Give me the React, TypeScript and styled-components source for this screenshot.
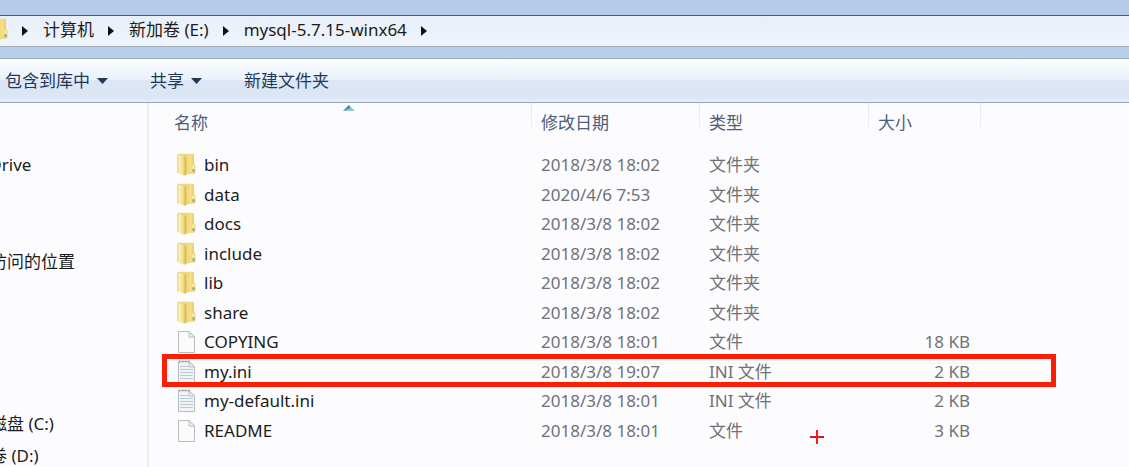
import React from "react";
import styled, { createGlobalStyle } from "styled-components";

const GlobalStyle = createGlobalStyle`
  * { box-sizing: border-box; }
  html, body, #root { height: 100%; }
  body {
    margin: 0;
    overflow: hidden;
    background: #fcfcfe;
    font-family: "Noto Sans", "Noto Sans CJK SC", sans-serif;
    font-size: 17px;
    line-height: 24px;
    color: #1c1c20;
  }
  button { font: inherit; color: inherit; background: none; border: 0; padding: 0; }
  a { color: inherit; text-decoration: none; }
`;

const Window = styled.div`
  display: flex;
  flex-direction: column;
  min-height: 100%;
`;

const Frame = styled.header`
  padding: 15px 0 11px;
  background: linear-gradient(#b3cae9, #b9d0ed);
`;

const AddressBar = styled.nav`
  display: flex;
  align-items: center;
  height: 32px;
  padding-bottom: 2px;
  border-top: 1px solid #4e5866;
  border-bottom: 1px solid #a3aebd;
  background: linear-gradient(#e9eff9, #f0f4fb);
`;

const FolderEdge = styled.span`
  display: flex;
  width: 8px;
  justify-content: flex-end;
  overflow: hidden;
  svg { flex: none; }
`;

const Crumb = styled.button`
  white-space: nowrap;
`;

const CrumbArrow = styled.svg`
  flex: none;
  width: 6px;
  height: 10px;
  margin: 2px 15px 0 14px;
`;

const Toolbar = styled.div`
  display: flex;
  align-items: center;
  gap: 42px;
  height: 45px;
  padding-left: 5px;
  border-top: 1px solid #97a9c2;
  border-bottom: 1px solid #93a4bb;
  background: linear-gradient(#fbfdff, #eaf1fb 48%, #dce6f5 50%, #dbe5f4 90%, #e2effc);
  color: #1e395b;
`;

const ToolButton = styled.button`
  display: flex;
  align-items: center;
  gap: 7px;
  white-space: nowrap;
`;

const Body = styled.div`
  display: flex;
  flex: 1;
`;

const Sidebar = styled.nav`
  flex: none;
  width: 149px;
  overflow: hidden;
  border-right: 2px solid #e4eef9;
`;

const Group = styled.ul<{ $space: number }>`
  list-style: none;
  margin: ${(p) => p.$space}px 0 0 -44px;
  padding: 0;
`;

const Place = styled.li`
  height: 32px;
  line-height: 32px;
  white-space: nowrap;
`;

const Pane = styled.main`
  position: relative;
  flex: 1;
  min-width: 0;
`;

const FileTable = styled.table`
  width: 100%;
  table-layout: fixed;
  border-collapse: collapse;
`;

const Column = styled.col<{ $width?: number }>`
  width: ${(p) => (p.$width ? `${p.$width}px` : "auto")};
`;

const Heading = styled.th<{ $first?: boolean }>`
  position: relative;
  height: 47px;
  padding: 8px 0 0 ${(p) => (p.$first ? 25 : 9)}px;
  vertical-align: top;
  text-align: left;
  font-weight: 400;
  color: #4c607a;
  background: linear-gradient(#dbe9f7, #e6eef9 60%, #fcfcfe) right top / 1px 30px no-repeat;
`;

const SortMark = styled.svg`
  position: absolute;
  top: 2px;
  left: calc(50% + 2px);
  width: 12px;
  height: 6px;
`;

const Row = styled.tr<{ $marked?: boolean }>`
  position: relative;
  height: 30px;
  &:nth-child(even) { height: 29px; }
  ${(p) =>
    p.$marked &&
    `&::after {
      content: "";
      position: absolute;
      top: -3px;
      bottom: -1px;
      left: 13px;
      right: 73px;
      border: 5px solid #fb1e04;
    }`}
`;

const Cell = styled.td<{ $end?: boolean }>`
  padding: 0 ${(p) => (p.$end ? 11 : 0)}px 0 9px;
  text-align: ${(p) => (p.$end ? "right" : "left")};
  white-space: nowrap;
  color: #717175;
`;

const NameCell = styled.td`
  padding: 0 0 0 27px;
`;

const FileName = styled.a`
  display: flex;
  align-items: center;
  gap: 8px;
`;

const Cross = styled.svg`
  position: absolute;
  top: 327px;
  left: 661px;
  width: 14px;
  height: 14px;
`;

function FolderIcon() {
  return (
    <svg width="20" height="24" viewBox="0 0 20 24" aria-hidden="true">
      <defs>
        <linearGradient id="flap" x1="0" x2="1">
          <stop offset="0" stopColor="#ead27a" />
          <stop offset=".25" stopColor="#f9eeb4" />
          <stop offset=".65" stopColor="#f3df8e" />
          <stop offset="1" stopColor="#d3ae4a" />
        </linearGradient>
        <linearGradient id="back" x1="0" x2="1">
          <stop offset="0" stopColor="#d9b550" />
          <stop offset=".3" stopColor="#edcf6a" />
          <stop offset=".75" stopColor="#f5df86" />
          <stop offset="1" stopColor="#e6c250" />
        </linearGradient>
      </defs>
      <path d="M2 1H17Q18 1 18 2V11Q19.300 11.500 19.300 13V19Q19.300 20.500 18 20.500L8 22Z" fill="url(#back)" />
      <path d="M2 1.300H17.500" stroke="#ecd989" />
      <path d="M1 2.500Q1 1.200 2 1.400L9 3.200Q10.200 3.600 10.200 5V21Q10 23 8 22.600L2 20.600Q1 20.200 1 19Z" fill="url(#flap)" />
      <rect x="16.500" y="12" width="2" height="5" rx="1" fill="#f7efc5" />
      <rect x="16.500" y="16" width="2" height="3" rx=".8" fill="#7dafa2" />
    </svg>
  );
}

function PageIcon({ lined }: { lined?: boolean }) {
  return (
    <svg width="20" height="24" viewBox="0 0 20 24" aria-hidden="true">
      <path d="M2.500 1.500H13L18.500 7V22.500H2.500Z" fill={lined ? "#f1f4f7" : "#fbfbfc"} stroke="#b9bbbf" />
      <path d="M13 1.500V7H18.500Z" fill="#eceef1" stroke="#bcbec2" strokeLinejoin="round" />
      {lined && (
        <>
          <path d="M3 1.500H14" stroke="#a89fa1" strokeWidth="2" strokeDasharray="1.500 1.500" />
          <path d="M4 6.500H12M4 9.500H17M4 12.500H17M4 15.500H17M4 18.500H17" stroke="#b9cbd8" />
        </>
      )}
    </svg>
  );
}

function Chevron() {
  return (
    <CrumbArrow viewBox="0 0 6 10" aria-hidden="true">
      <path d="M0 0L6 5L0 10Z" fill="#111" />
    </CrumbArrow>
  );
}

function DropArrow() {
  return (
    <svg width="11" height="6" viewBox="0 0 11 6" aria-hidden="true">
      <path d="M0 0H11L5.500 6Z" fill="#1e395b" />
    </svg>
  );
}

type Kind = "folder" | "page" | "text";
type Entry = { name: string; date: string; type: string; size?: string; kind: Kind; marked?: boolean };

const entries: Entry[] = [
  { name: "bin", date: "2018/3/8 18:02", type: "文件夹", kind: "folder" },
  { name: "data", date: "2020/4/6 7:53", type: "文件夹", kind: "folder" },
  { name: "docs", date: "2018/3/8 18:02", type: "文件夹", kind: "folder" },
  { name: "include", date: "2018/3/8 18:02", type: "文件夹", kind: "folder" },
  { name: "lib", date: "2018/3/8 18:02", type: "文件夹", kind: "folder" },
  { name: "share", date: "2018/3/8 18:02", type: "文件夹", kind: "folder" },
  { name: "COPYING", date: "2018/3/8 18:01", type: "文件", size: "18 KB", kind: "page" },
  { name: "my.ini", date: "2018/3/8 19:07", type: "INI 文件", size: "2 KB", kind: "text", marked: true },
  { name: "my-default.ini", date: "2018/3/8 18:01", type: "INI 文件", size: "2 KB", kind: "text" },
  { name: "README", date: "2018/3/8 18:01", type: "文件", size: "3 KB", kind: "page" },
];

const crumbs = ["计算机", "新加卷 (E:)", "mysql-5.7.15-winx64"];

export default function App() {
  return (
    <>
      <GlobalStyle />
      <Window>
        <Frame>
          <AddressBar>
            <FolderEdge>
              <FolderIcon />
            </FolderEdge>
            <Chevron />
            {crumbs.map((name) => (
              <React.Fragment key={name}>
                <Crumb type="button">{name}</Crumb>
                <Chevron />
              </React.Fragment>
            ))}
          </AddressBar>
        </Frame>
        <Toolbar>
          <ToolButton type="button">包含到库中<DropArrow /></ToolButton>
          <ToolButton type="button">共享<DropArrow /></ToolButton>
          <ToolButton type="button">新建文件夹</ToolButton>
        </Toolbar>
        <Body>
          <Sidebar>
            <Group $space={46}>
              <Place><a href="#onedrive">OneDrive</a></Place>
            </Group>
            <Group $space={65}>
              <Place><a href="#recent">最近访问的位置</a></Place>
            </Group>
            <Group $space={130}>
              <Place><a href="#c">本地磁盘 (C:)</a></Place>
              <Place><a href="#d">新加卷 (D:)</a></Place>
            </Group>
          </Sidebar>
          <Pane>
            <FileTable>
              <colgroup>
                <Column $width={383} />
                <Column $width={168} />
                <Column $width={169} />
                <Column $width={112} />
                <Column />
              </colgroup>
              <thead>
                <tr>
                  <Heading $first scope="col">
                    <button type="button">名称</button>
                    <SortMark viewBox="0 0 12 6" aria-hidden="true">
                      <path d="M6 0L12 6H0Z" fill="#8fc3d8" />
                      <path d="M6 0L0 6L7 3Z" fill="#4b7f9b" />
                    </SortMark>
                  </Heading>
                  <Heading scope="col"><button type="button">修改日期</button></Heading>
                  <Heading scope="col"><button type="button">类型</button></Heading>
                  <Heading scope="col"><button type="button">大小</button></Heading>
                  <td />
                </tr>
              </thead>
              <tbody>
                {entries.map((e) => (
                  <Row key={e.name} $marked={e.marked}>
                    <NameCell>
                      <FileName href={`#${e.name}`}>
                        {e.kind === "folder" ? <FolderIcon /> : <PageIcon lined={e.kind === "text"} />}
                        {e.name}
                      </FileName>
                    </NameCell>
                    <Cell>{e.date}</Cell>
                    <Cell>{e.type}</Cell>
                    <Cell $end>{e.size}</Cell>
                    <td />
                  </Row>
                ))}
              </tbody>
            </FileTable>
            <Cross viewBox="0 0 14 14" aria-hidden="true">
              <path d="M0 7H14" stroke="#d3142c" strokeWidth="2" />
              <path d="M7 0V14" stroke="#f01c20" strokeWidth="2" />
            </Cross>
          </Pane>
        </Body>
      </Window>
    </>
  );
}
